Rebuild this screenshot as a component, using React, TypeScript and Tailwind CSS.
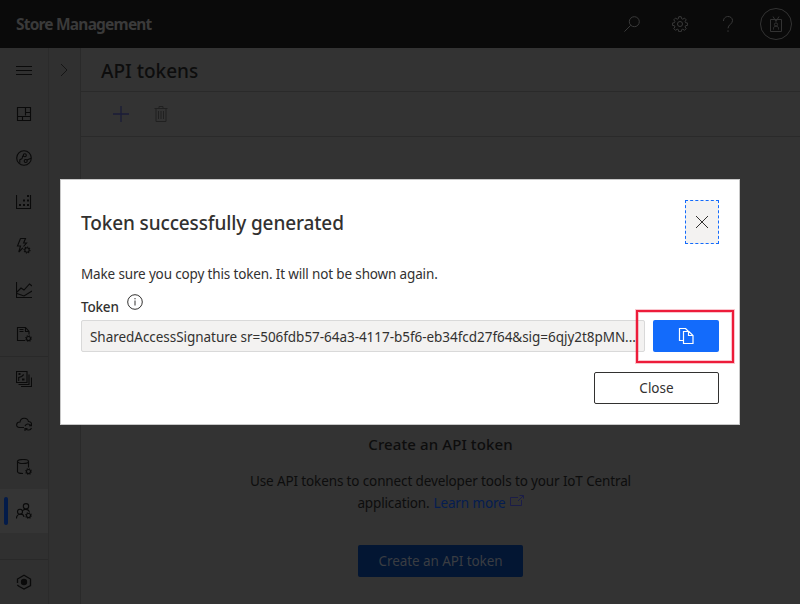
import React from "react";

type IconProps = { children: React.ReactNode; size?: number; className?: string; stroke?: number };

function Icon({ children, size = 16, className = "text-[#0a0a0a]", stroke = 1 }: IconProps) {
  return (
    <svg
      width={size}
      height={size}
      viewBox={`0 0 ${size} ${size}`}
      fill="none"
      stroke="currentColor"
      strokeWidth={stroke}
      className={`shrink-0 ${className}`}
    >
      {children}
    </svg>
  );
}

const gear = (
  <g>
    <circle cx="12.5" cy="12.5" r="2" />
    <circle cx="12.5" cy="12.5" r="2.8" strokeDasharray="1.1 1.1" />
  </g>
);

function NavItem({ children, selected = false }: { children: React.ReactNode; selected?: boolean }) {
  return (
    <div className={`flex h-11 w-12 shrink-0 items-center ${selected ? "bg-[#353535]" : ""}`}>
      <div className={`ml-1 h-7 w-1 rounded-sm ${selected ? "bg-[#031b49]" : ""}`} />
      <div className="ml-2">
        <Icon stroke={1.1}>{children}</Icon>
      </div>
    </div>
  );
}

function Header() {
  return (
    <header className="flex h-12 shrink-0 items-center justify-between bg-[#0a0a0a] pl-4 pr-2 text-[#3a3a3a]">
      <span className="text-[15.5px] leading-6 font-bold tracking-[-0.8px]">Store Management</span>
      <div className="flex items-center">
        <Icon className="mr-8 text-[#3a3a3a]">
          <circle cx="10.3" cy="5.7" r="5" />
          <path d="M6.7 9.3L.4 15.6" />
        </Icon>
        <Icon className="mr-8 text-[#3a3a3a]">
          <path d="M6.8.7h2.4l.4 2 1.2.5 1.7-1.1 1.7 1.7-1.1 1.7.5 1.2 2 .4v2.2l-2 .4-.5 1.2 1.1 1.7-1.7 1.7-1.7-1.1-1.2.5-.4 2H6.8l-.4-2-1.2-.5-1.7 1.1-1.7-1.7 1.1-1.7-.5-1.2-2-.4V7.1l2-.4.5-1.2-1.1-1.7 1.7-1.7 1.7 1.1 1.2-.5z" />
          <circle cx="8" cy="8" r="2.5" />
        </Icon>
        <Icon className="mr-6 text-[#3a3a3a]">
          <path d="M3.5 5c0-5.9 9-5.9 9-.4 0 3.4-4.5 4.2-4.5 7.7M8 14.3v1.5" />
        </Icon>
        <div className="flex size-8 items-center justify-center rounded-full border border-[#333]">
          <Icon className="text-[#333]">
            <path d="M2.5 3.5h11v12h-11zM5 .5l3 5 3-5" />
            <circle cx="8" cy="8.5" r="1.6" />
            <path d="M5.5 13.5v-1.2c0-2.8 5-2.8 5 0v1.2" />
          </Icon>
        </div>
      </div>
    </header>
  );
}

function Sidebar() {
  return (
    <nav className="flex w-[49px] shrink-0 flex-col border-r border-[#2b2b2b] bg-[#303030]">
      <NavItem>
        <path d="M0 4.5h16M0 8.5h16M0 12.5h16" />
      </NavItem>
      <NavItem>
        <path d="M1.5 1.5h13v13h-13zM9.5 1.5v8M1.5 10.5h13M9.5 6.5h5M6.5 10.5v4" />
      </NavItem>
      <NavItem>
        <circle cx="8" cy="8" r="7.3" />
        <circle cx="8.8" cy="5.3" r="1.5" />
        <circle cx="9.7" cy="11" r="1.5" />
        <path d="M7.3 5.7C5.5 6.3 7.3 7.8 5.7 8.8L3.8 9.8v3M15 8.3l-4 1.7" />
      </NavItem>
      <NavItem>
        <path d="M.5 1v13.500h14V1" />
        <path d="M11 2h2M11 6.500h2M7 6.500h2M3 11h2M7 11h2M11 11h2" strokeWidth="2" />
      </NavItem>
      <NavItem>
        <path d="M4.5.5h5L7.6 5h2.9L7.5 8.5M4.5.5L1.5 8h3L2.8 14l4-4.2" />
        <circle cx="11" cy="12" r="2.2" />
        <circle cx="11" cy="12" r="3" strokeDasharray="1.1 1.2" />
      </NavItem>
      <NavItem>
        <path d="M.5 0v15.5H16M1 10l4-4 3 2 5.5-6L16 4M1 11.5L8 14l8-5" />
      </NavItem>
      <NavItem>
        <path d="M9 14.5H1.5v-13h8l3.5 4v3M9.5 1.5v4H13M3.5 3.5h4M3.5 5.5h4" />
        {gear}
      </NavItem>
      <div className="h-px shrink-0 bg-[#292929]" />
      <NavItem>
        <path d="M.5.5h10.500v11H.5zM2.500 13.500h10.500V3.500M5 15.500h10.500V6.500M2.7 10V6.500l3-1 2-2" />
        <path d="M2.5 3h2M6 8.500h2.500" strokeWidth="2" />
      </NavItem>
      <NavItem>
        <path d="M8 12.5H3.5C-.6 12.5-.2 7 4 7c.5-5 7.7-5 8.4-.5 1.6-.1 3 .8 3.1 2.5M9 11c1-2.5 4-2.6 6-.6M15.5 8.5v2.3h-2.5M15.5 13c-1 2.5-4 2.7-6 .6M9 16v-2.5h2.5" />
      </NavItem>
      <NavItem>
        <ellipse cx="7" cy="2.5" rx="5.5" ry="2" />
        <path d="M1.5 2.5v10c0 1.3 2.5 2 5.5 2M12.5 2.5v6" />
        {gear}
      </NavItem>
      <NavItem selected>
        <circle cx="10" cy="3.3" r="2.7" />
        <circle cx="4" cy="8.8" r="2.5" />
        <path d="M.5 15.5c0-5.5 7-5.5 7.5-1.5M6.3 8c2-2.5 6-2 7.2.8" />
        {gear}
      </NavItem>
      <div className="h-[26px] shrink-0" />
      <div className="h-px shrink-0 bg-[#292929]" />
      <NavItem>
        <path d="M1.5 9V5L8 1.2 14.5 5v6.5L8 15l-4.7-2.5M1.3 11l2 1.5" strokeWidth="1.3" />
        <circle cx="8" cy="8" r="3.2" fill="currentColor" stroke="none" />
      </NavItem>
    </nav>
  );
}

function Page() {
  return (
    <main className="flex flex-1 flex-col text-[#0d0d0d]">
      <div className="flex h-11 shrink-0 items-center border-b border-[#2a2a2a] pt-1 pl-5">
        <h1 className="text-[19px] font-medium">API tokens</h1>
      </div>
      <div className="flex h-[45px] shrink-0 items-center gap-6 border-b border-[#2a2a2a] pl-8">
        <Icon className="text-[#1b1d38]">
          <path d="M0 8h16M8 0v16" strokeWidth="1.3" />
        </Icon>
        <Icon className="text-[#202020]">
          <path d="M1.5 2.5h13M3 2.5v13h10v-13M6 2.5v-2h4v2M5.5 5v8M8 5v8M10.5 5v8" />
        </Icon>
      </div>
      <div className="flex flex-col items-center pt-[295px]">
        <h2 className="text-[15px] leading-6 font-medium tracking-[0.1px]">Create an API token</h2>
        <div className="mt-[14px] flex flex-col items-center text-[13.5px] leading-[22px] tracking-[-0.13px] whitespace-nowrap">
          <p>Use API tokens to connect developer tools to your IoT Central</p>
          <p className="flex items-center">
            <span>application.</span>
            <span className="ml-1 text-[#051d50]">Learn more</span>
            <Icon size={14} className="mb-1 ml-1 text-[#1b1d48]">
              <path d="M8 3.5H.5v8h11V6M8 7l5-5M9.5 1.5h4v3" />
            </Icon>
          </p>
        </div>
        <button className="mt-[31px] flex h-8 w-[165px] items-center justify-center rounded-xs bg-[#031633] text-[13.5px] tracking-[-0.08px] text-[#3a3d42]">
          Create an API token
        </button>
      </div>
    </main>
  );
}

function TokenDialog() {
  return (
    <div className="absolute top-[179px] left-[60px] flex h-[246px] w-[680px] flex-col border border-[#c8c8c8] bg-white pt-5 pr-5 pl-5 text-[#323130]">
      <div className="flex h-11 items-start justify-between">
        <h2 className="mt-[9px] text-[19px] leading-[28px] font-medium tracking-[-0.13px] whitespace-nowrap">
          Token successfully generated
        </h2>
        <button className="flex h-11 w-[34px] items-center justify-center border border-dashed border-[#136bfb] bg-[#f3f2f1]">
          <Icon size={14} className="text-[#323130]">
            <path d="M1 1l12 12M13 1L1 13" />
          </Icon>
        </button>
      </div>
      <p className="mt-5 text-[13.5px] leading-5 tracking-[-0.15px] whitespace-nowrap">
        Make sure you copy this token. It will not be shown again.
      </p>
      <div className="mt-2 flex h-7 items-start">
        <span className="mt-[5px] w-[38px] text-[13.5px] leading-5 font-medium tracking-[-0.2px]">Token</span>
        <Icon className="mt-[2px] ml-2 text-[#323130]">
          <circle cx="8" cy="8" r="7.3" />
          <path d="M8 6.5v5M8 4v1.3" />
        </Icon>
      </div>
      <div className="flex h-8 justify-between">
        <div className="flex w-[564px] items-center rounded-xs border border-[#d9d9d9] bg-[#f3f2f1] pt-0.5 pl-2 text-[13.5px] tracking-[-0.04px] whitespace-nowrap">
          SharedAccessSignature sr=506fdb57-64a3-4117-b5f6-eb34fcd27f64&amp;sig=6qjy2t8pMN...
        </div>
        <button className="flex w-[66px] items-center justify-center rounded-xs bg-[#136bfb]">
          <Icon className="text-white" stroke={1.2}>
            <path d="M5 12.5H1.5v-12h6l3 3M5.5 3.5h5.5l4 4v8H5.500zM10.500 3.500v4h4" />
          </Icon>
        </button>
      </div>
      <button className="mt-5 flex h-8 w-[125px] items-center justify-center self-end rounded-xs border border-[#323130] text-[13.5px]">
        Close
      </button>
    </div>
  );
}

export default function App() {
  return (
    <div className="relative flex h-[604px] w-[800px] flex-col overflow-hidden bg-[#333] font-['Noto_Sans','Open_Sans',sans-serif]">
      <Header />
      <div className="flex min-h-0 flex-1">
        <Sidebar />
        <div className="flex w-8 shrink-0 justify-center border-r border-[#2a2a2a] bg-[#303030] pt-[15px]">
          <Icon size={14} className="text-[#151515]">
            <path d="M3 1l6 6-6 6" />
          </Icon>
        </div>
        <Page />
      </div>
      <TokenDialog />
      <div className="absolute top-[310px] left-[636px] h-[53px] w-[98px] border-2 border-[#ed1c3a] shadow-[0_0_0_1px_#ed1c3a40,inset_0_0_0_1px_#ed1c3a40]" />
    </div>
  );
}
